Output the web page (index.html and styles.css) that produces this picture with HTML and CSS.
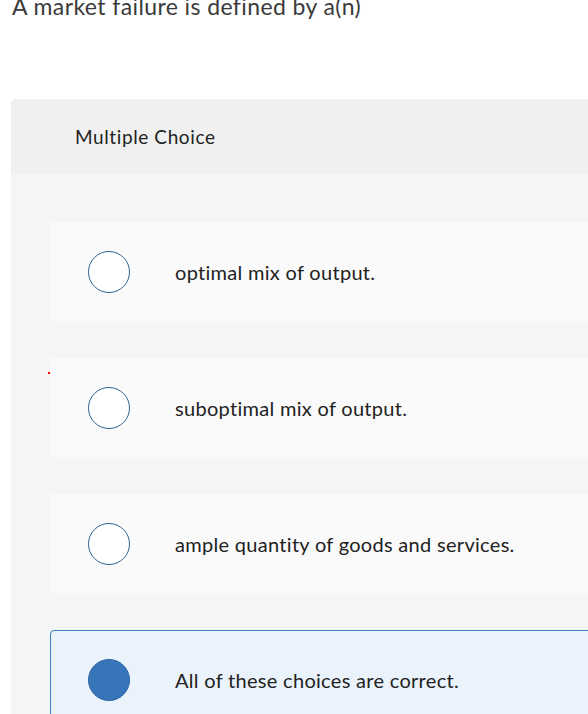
FILE: index.html
```html
<!DOCTYPE html>
<html lang="en">
<head>
<meta charset="utf-8">
<link rel="stylesheet" href="styles.css">
</head>
<body>
<h1 class="question">A market failure is defined by a(n)</h1>
<section class="panel">
  <div class="panel-head">Multiple Choice</div>
  <div class="panel-body">
    <label class="option">
      <span class="radio"></span>
      <span class="option-text">optimal mix of output.</span>
    </label>
    <label class="option">
      <span class="mark"></span>
      <span class="radio"></span>
      <span class="option-text">suboptimal mix of output.</span>
    </label>
    <label class="option">
      <span class="radio"></span>
      <span class="option-text">ample quantity of goods and services.</span>
    </label>
    <label class="option selected">
      <span class="radio"></span>
      <span class="option-text">All of these choices are correct.</span>
    </label>
  </div>
</section>
</body>
</html>
```

FILE: styles.css
```css
html, body {
  margin: 0;
  padding: 0;
  background: #ffffff;
  overflow: hidden;
  height: 714px;
}
body {
  font-family: Lato, "Open Sans", sans-serif;
  color: #333333;
}
.question {
  margin: -8px 0 0 12px;
  font-size: 23px;
  font-weight: 400;
  line-height: 29px;
  color: #3a3a3a;
  letter-spacing: 0.4px;
}
.panel {
  margin: 78px 0 0 11px;
  width: 640px;
  border-top-left-radius: 5px;
  overflow: hidden;
  background: #f5f5f5;
}
.panel-head {
  height: 75px;
  background: #f0f0f0;
  padding-left: 64px;
  display: flex;
  align-items: center;
  font-size: 19px;
  letter-spacing: 0.6px;
  color: #222222;
}
.panel-body {
  padding: 48px 0 40px 39px;
  display: flex;
  flex-direction: column;
  gap: 37px;
}
.option {
  position: relative;
  height: 99px;
  box-sizing: border-box;
  background: #fafafa;
  border-radius: 4px 0 0 4px;
  display: flex;
  align-items: center;
  padding-left: 38px;
  gap: 45px;
  font-size: 20px;
  letter-spacing: 0.3px;
  color: #222222;
}
.radio {
  width: 42px;
  height: 42px;
  box-sizing: border-box;
  border-radius: 50%;
  border: 1.5px solid #2f6497;
  background: #ffffff;
  flex: none;
}
.selected {
  background: #eaf2fb;
  border: 1px solid #3b7cc2;
  padding-left: 37px;
}
.selected .radio {
  background: #3774b8;
  border-color: #2d64a3;
}
.mark {
  position: absolute;
  left: -2px;
  top: 14px;
  width: 2px;
  height: 2px;
  background: #ff0000;
}
```
